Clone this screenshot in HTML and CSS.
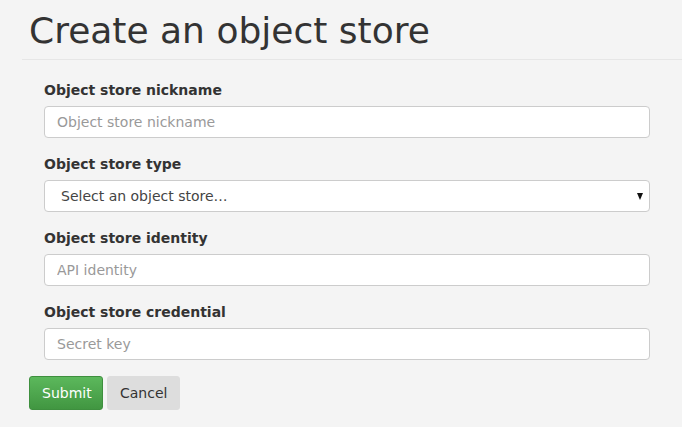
FILE: index.html
```html
<!DOCTYPE html>
<html>
<head>
<meta charset="utf-8">
<link rel="stylesheet" href="styles.css">
</head>
<body>
<div class="page-header">
  <h1 class="title">Create an object store</h1>
</div>
<form class="form">
  <div class="fields">
    <div class="group">
      <label class="label">Object store nickname</label>
      <input class="input" type="text" placeholder="Object store nickname">
    </div>
    <div class="group">
      <label class="label">Object store type</label>
      <div class="select">
        <span class="select-text">Select an object store…</span>
        <span class="caret"></span>
      </div>
    </div>
    <div class="group">
      <label class="label">Object store identity</label>
      <input class="input" type="text" placeholder="API identity">
    </div>
    <div class="group">
      <label class="label">Object store credential</label>
      <input class="input" type="text" placeholder="Secret key">
    </div>
  </div>
  <div class="actions">
    <button type="button" class="btn btn-submit">Submit</button>
    <button type="button" class="btn btn-cancel">Cancel</button>
  </div>
</form>
</body>
</html>
```
FILE: styles.css
```css
html, body {
  margin: 0;
  padding: 0;
  background: #f4f4f4;
  font-family: "DejaVu Sans", sans-serif;
  color: #333;
}
.page-header {
  margin-left: 22px;
  border-bottom: 1px solid #e6e6e6;
  padding: 11px 0 8px 7px;
}
.title {
  margin: 0;
  font-size: 36px;
  font-weight: normal;
  line-height: 40px;
  color: #333;
}
.form {
  padding: 20px 32px 0 29px;
}
.fields {
  padding-left: 15px;
}
.group {
  display: flex;
  flex-direction: column;
  margin-bottom: 16px;
}
.label {
  font-size: 14px;
  font-weight: bold;
  line-height: 20px;
  margin-bottom: 6px;
  color: #333;
}
.input, .select {
  box-sizing: border-box;
  height: 32px;
  width: 100%;
  border: 1px solid #ccc;
  border-radius: 4px;
  background: #fff;
  font-family: "DejaVu Sans", sans-serif;
  font-size: 14px;
  padding: 0 12px;
  color: #555;
}
.input::placeholder {
  color: #999;
}
.select {
  display: flex;
  align-items: center;
  justify-content: space-between;
  padding: 0 6px 0 16px;
}
.select-text {
  color: #444;
}
.caret {
  width: 0;
  height: 0;
  border-left: 3.5px solid transparent;
  border-right: 3.5px solid transparent;
  border-top: 7px solid #111;
}
.actions {
  display: flex;
  gap: 4px;
}
.btn {
  font-family: "DejaVu Sans", sans-serif;
  font-size: 14px;
  height: 34px;
  padding: 0 12px;
  border-radius: 3px;
  border: 1px solid transparent;
}
.btn-submit {
  color: #fff;
  background: linear-gradient(#5cb85c, #419641);
  border-color: #3e8f3e;
  width: 74px;
}
.btn-cancel {
  color: #333;
  background: #ddd;
  border-color: #ddd;
  width: 73px;
}
```
